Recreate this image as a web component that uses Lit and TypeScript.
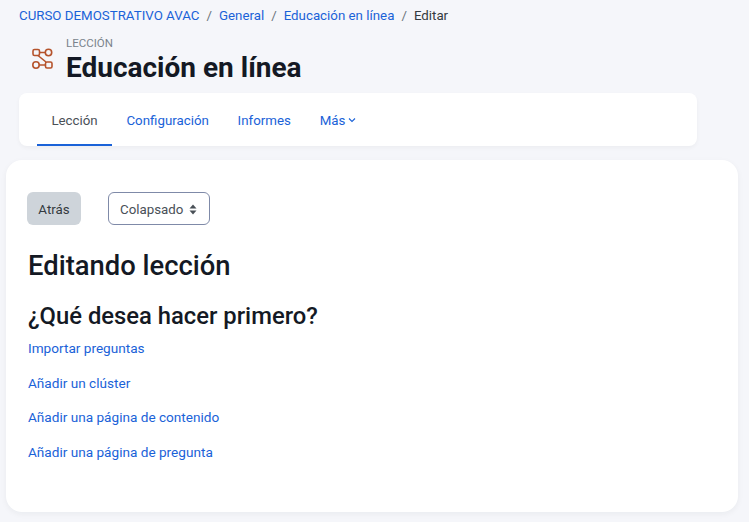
import { LitElement, html, css } from 'lit';
import { customElement } from 'lit/decorators.js';

@customElement('app-root')
export class AppRoot extends LitElement {
  static styles = css`
    :host {
      display: block;
      height: 522px;
      overflow: hidden;
      background: #f5f6fa;
      font-family: Roboto, 'Noto Sans', sans-serif;
      font-size: 13.3px;
      color: #1d2125;
    }

    a {
      color: #1a62d8;
      text-decoration: none;
    }

    .crumbs {
      display: flex;
      align-items: center;
      gap: 7px;
      height: 30px;
      padding-left: 19px;
    }

    .crumbs .sep {
      color: #6a737b;
    }

    .crumbs .current {
      color: #343a40;
    }

    .heading {
      display: flex;
      align-items: flex-start;
      gap: 12px;
      height: 63px;
      padding-left: 30px;
    }

    .heading svg {
      display: block;
      flex: none;
      margin-top: 16px;
    }

    .kicker {
      font-size: 11.5px;
      line-height: 14px;
      color: #7b848c;
      margin-top: 6px;
    }

    h1 {
      margin: 1px 0 0;
      font-size: 28px;
      line-height: 34px;
      font-weight: 700;
      color: #141924;
    }

    .tabs {
      display: flex;
      height: 53px;
      margin: 0 52px 0 19px;
      padding-left: 18px;
      background: #fff;
      border-radius: 8px;
      box-shadow: 0 2px 4px rgba(29, 33, 37, 0.04);
    }

    .tab {
      display: flex;
      align-items: center;
      gap: 3px;
      padding: 3px 14.4px 0;
      border-bottom: 2px solid transparent;
    }

    .tab.active {
      color: #495057;
      border-bottom-color: #1a62d8;
    }

    .card {
      margin: 14px 11px 0 6px;
      height: 352px;
      box-sizing: border-box;
      padding: 32px 21px 0 21px;
      background: #fff;
      border-radius: 16px;
      box-shadow: 0 2px 6px rgba(29, 33, 37, 0.05);
    }

    .toolbar {
      display: flex;
      gap: 27px;
    }

    .btn {
      display: flex;
      align-items: center;
      justify-content: center;
      height: 33px;
      box-sizing: border-box;
      padding-top: 1px;
      width: 54px;
      border-radius: 6px;
      background: #ced4da;
      color: #343a40;
    }

    .select {
      display: flex;
      align-items: center;
      gap: 6px;
      height: 33px;
      box-sizing: border-box;
      padding: 1px 12px 0 11px;
      border: 1px solid #7f8aa8;
      border-radius: 6px;
      color: #495057;
    }

    h2 {
      margin: 24px 0 0 1px;
      font-size: 27.4px;
      line-height: 34px;
      font-weight: 500;
      color: #141924;
    }

    h3 {
      margin: 18px 0 0 1px;
      font-size: 23.8px;
      line-height: 30px;
      font-weight: 500;
      color: #141924;
    }

    .links {
      display: flex;
      flex-direction: column;
      gap: 16.6px;
      margin: 8px 0 0 1px;
      line-height: 18px;
      font-size: 13.6px;
    }
  `;

  render() {
    return html`
      <nav class="crumbs">
        <a href="#">CURSO DEMOSTRATIVO AVAC</a>
        <span class="sep">/</span>
        <a href="#">General</a>
        <span class="sep">/</span>
        <a href="#">Educación en línea</a>
        <span class="sep">/</span>
        <span class="current">Editar</span>
      </nav>
      <header class="heading">
        <svg width="24" height="24" viewBox="0 0 24 24" fill="none" stroke="#b5532c" stroke-width="1.6">
          <rect x="3" y="3.5" width="6.5" height="6" rx="1.5" />
          <circle cx="18.5" cy="6.5" r="3.2" />
          <circle cx="6" cy="19" r="3.2" />
          <rect x="15.5" y="16" width="6.5" height="6" rx="1.5" />
          <path d="M9.5 6.5h5.8M9.2 19h6.3M8 9.5l8 6.5" />
        </svg>
        <div>
          <div class="kicker">LECCIÓN</div>
          <h1>Educación en línea</h1>
        </div>
      </header>
      <div class="tabs">
        <a class="tab active" href="#">Lección</a>
        <a class="tab" href="#">Configuración</a>
        <a class="tab" href="#">Informes</a>
        <a class="tab" href="#">Más
          <svg width="8" height="8" viewBox="0 0 8 8" fill="none" stroke="currentColor" stroke-width="1.1">
            <path d="M1 2.5 4 5.5 7 2.5" />
          </svg>
        </a>
      </div>
      <main class="card">
        <div class="toolbar">
          <div class="btn">Atrás</div>
          <div class="select">
            Colapsado
            <svg width="8" height="11" viewBox="0 0 8 11" fill="#495057">
              <path d="M4 0.5 7.5 4.5H0.5ZM4 10.5 0.5 6.5H7.5Z" />
            </svg>
          </div>
        </div>
        <h2>Editando lección</h2>
        <h3>¿Qué desea hacer primero?</h3>
        <div class="links">
          <a href="#">Importar preguntas</a>
          <a href="#">Añadir un clúster</a>
          <a href="#">Añadir una página de contenido</a>
          <a href="#">Añadir una página de pregunta</a>
        </div>
      </main>
    `;
  }
}

declare global {
  interface HTMLElementTagNameMap {
    'app-root': AppRoot;
  }
}
